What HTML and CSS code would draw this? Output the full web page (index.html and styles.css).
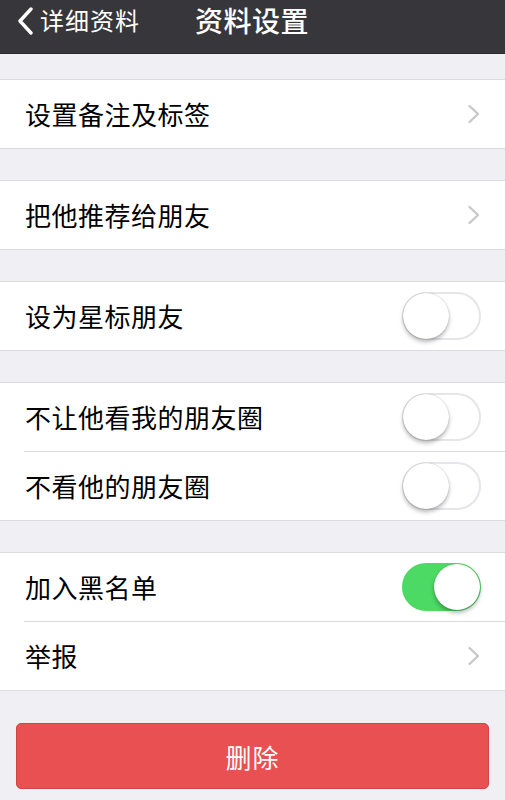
FILE: index.html
```html
<!DOCTYPE html>
<html lang="zh-CN">
<head>
<meta charset="utf-8">
<title>资料设置</title>
<link rel="stylesheet" href="styles.css">
</head>
<body>
<header class="nav">
  <div class="nav-bar">
    <a class="back">
      <svg class="back-icon" width="18" height="28" viewBox="0 0 18 28"><path d="M15 2 L4 14 L15 26" fill="none" stroke="#fff" stroke-width="3.4" stroke-linecap="round" stroke-linejoin="round"/></svg>
      <span class="back-text">详细资料</span>
    </a>
    <h1 class="title">资料设置</h1>
  </div>
</header>
<main class="content">
  <section class="group first">
    <div class="row"><span class="label">设置备注及标签</span><svg class="chev" width="14" height="20" viewBox="0 0 14 20"><path d="M2.5 2 L11 10 L2.5 18" fill="none" stroke="#c7c7cc" stroke-width="2.4" stroke-linecap="round" stroke-linejoin="round"/></svg></div>
  </section>
  <section class="group">
    <div class="row"><span class="label">把他推荐给朋友</span><svg class="chev" width="14" height="20" viewBox="0 0 14 20"><path d="M2.5 2 L11 10 L2.5 18" fill="none" stroke="#c7c7cc" stroke-width="2.4" stroke-linecap="round" stroke-linejoin="round"/></svg></div>
  </section>
  <section class="group">
    <div class="row"><span class="label">设为星标朋友</span><span class="switch"><span class="knob"></span></span></div>
  </section>
  <section class="group">
    <div class="row"><span class="label">不让他看我的朋友圈</span><span class="switch"><span class="knob"></span></span></div>
    <div class="row sep"><span class="label">不看他的朋友圈</span><span class="switch"><span class="knob"></span></span></div>
  </section>
  <section class="group">
    <div class="row"><span class="label">加入黑名单</span><span class="switch on"><span class="knob"></span></span></div>
    <div class="row sep"><span class="label">举报</span><svg class="chev" width="14" height="20" viewBox="0 0 14 20"><path d="M2.5 2 L11 10 L2.5 18" fill="none" stroke="#c7c7cc" stroke-width="2.4" stroke-linecap="round" stroke-linejoin="round"/></svg></div>
  </section>
  <div class="actions">
    <button class="delete">删除</button>
  </div>
</main>
</body>
</html>
```
FILE: styles.css
```css
html, body {
  margin: 0;
  padding: 0;
}
body {
  background: #efeff4;
  font-family: "Noto Sans CJK SC", "Noto Sans", sans-serif;
  width: 505px;
  overflow: hidden;
}
.nav {
  background: #37363b;
  height: 54px;
  box-sizing: border-box;
  border-bottom: 1px solid #2a292d;
}
.nav-bar {
  height: 40px;
  display: flex;
  align-items: center;
  padding-left: 16px;
}
.back {
  display: flex;
  align-items: center;
  color: #fff;
  width: 179px;
}
.back-icon {
  margin-right: 6px;
  margin-top: 1px;
}
.back-text {
  font-size: 24px;
  line-height: 30px;
  letter-spacing: 1px;
}
.title {
  margin: 0;
  font-size: 28px;
  line-height: 34px;
  font-weight: 500;
  color: #fff;
  letter-spacing: 0.5px;
}
.group {
  background: #fff;
  border-top: 1px solid #dcdce0;
  border-bottom: 1px solid #dcdce0;
  margin-top: 31px;
}
.group.first {
  margin-top: 25px;
}
.row {
  height: 68px;
  display: flex;
  align-items: center;
  justify-content: space-between;
  padding: 0 24px 0 25px;
  position: relative;
}
.row.sep {
  border-top: 1px solid #dcdce0;
  margin-left: 24px;
  padding-left: 1px;
}
.label {
  font-size: 26px;
  color: #000;
  line-height: 34px;
  letter-spacing: 0.5px;
}
.chev {
  margin-right: 0;
}
.switch {
  width: 79px;
  height: 48px;
  box-sizing: border-box;
  border-radius: 24px;
  border: 2px solid #e5e5ea;
  background: #fff;
  display: flex;
  align-items: center;
  margin-right: 0;
}
.knob {
  width: 46px;
  height: 46px;
  border-radius: 50%;
  background: #fff;
  box-shadow: 0 3px 4px rgba(0,0,0,0.28), 0 0 1px rgba(0,0,0,0.3);
  margin-left: -1px;
}
.switch.on {
  background: #4cd964;
  border-color: #4cd964;
  justify-content: flex-end;
}
.switch.on .knob {
  margin-left: 0;
  margin-right: -1px;
}
.actions {
  padding: 32px 16px 0 16px;
}
.delete {
  display: block;
  width: 100%;
  height: 66px;
  border: 1px solid #d24545;
  border-radius: 5px;
  background: #e85051;
  color: #fff;
  font-family: "Noto Sans CJK SC", "Noto Sans", sans-serif;
  font-size: 26px;
  letter-spacing: 1px;
}
```
